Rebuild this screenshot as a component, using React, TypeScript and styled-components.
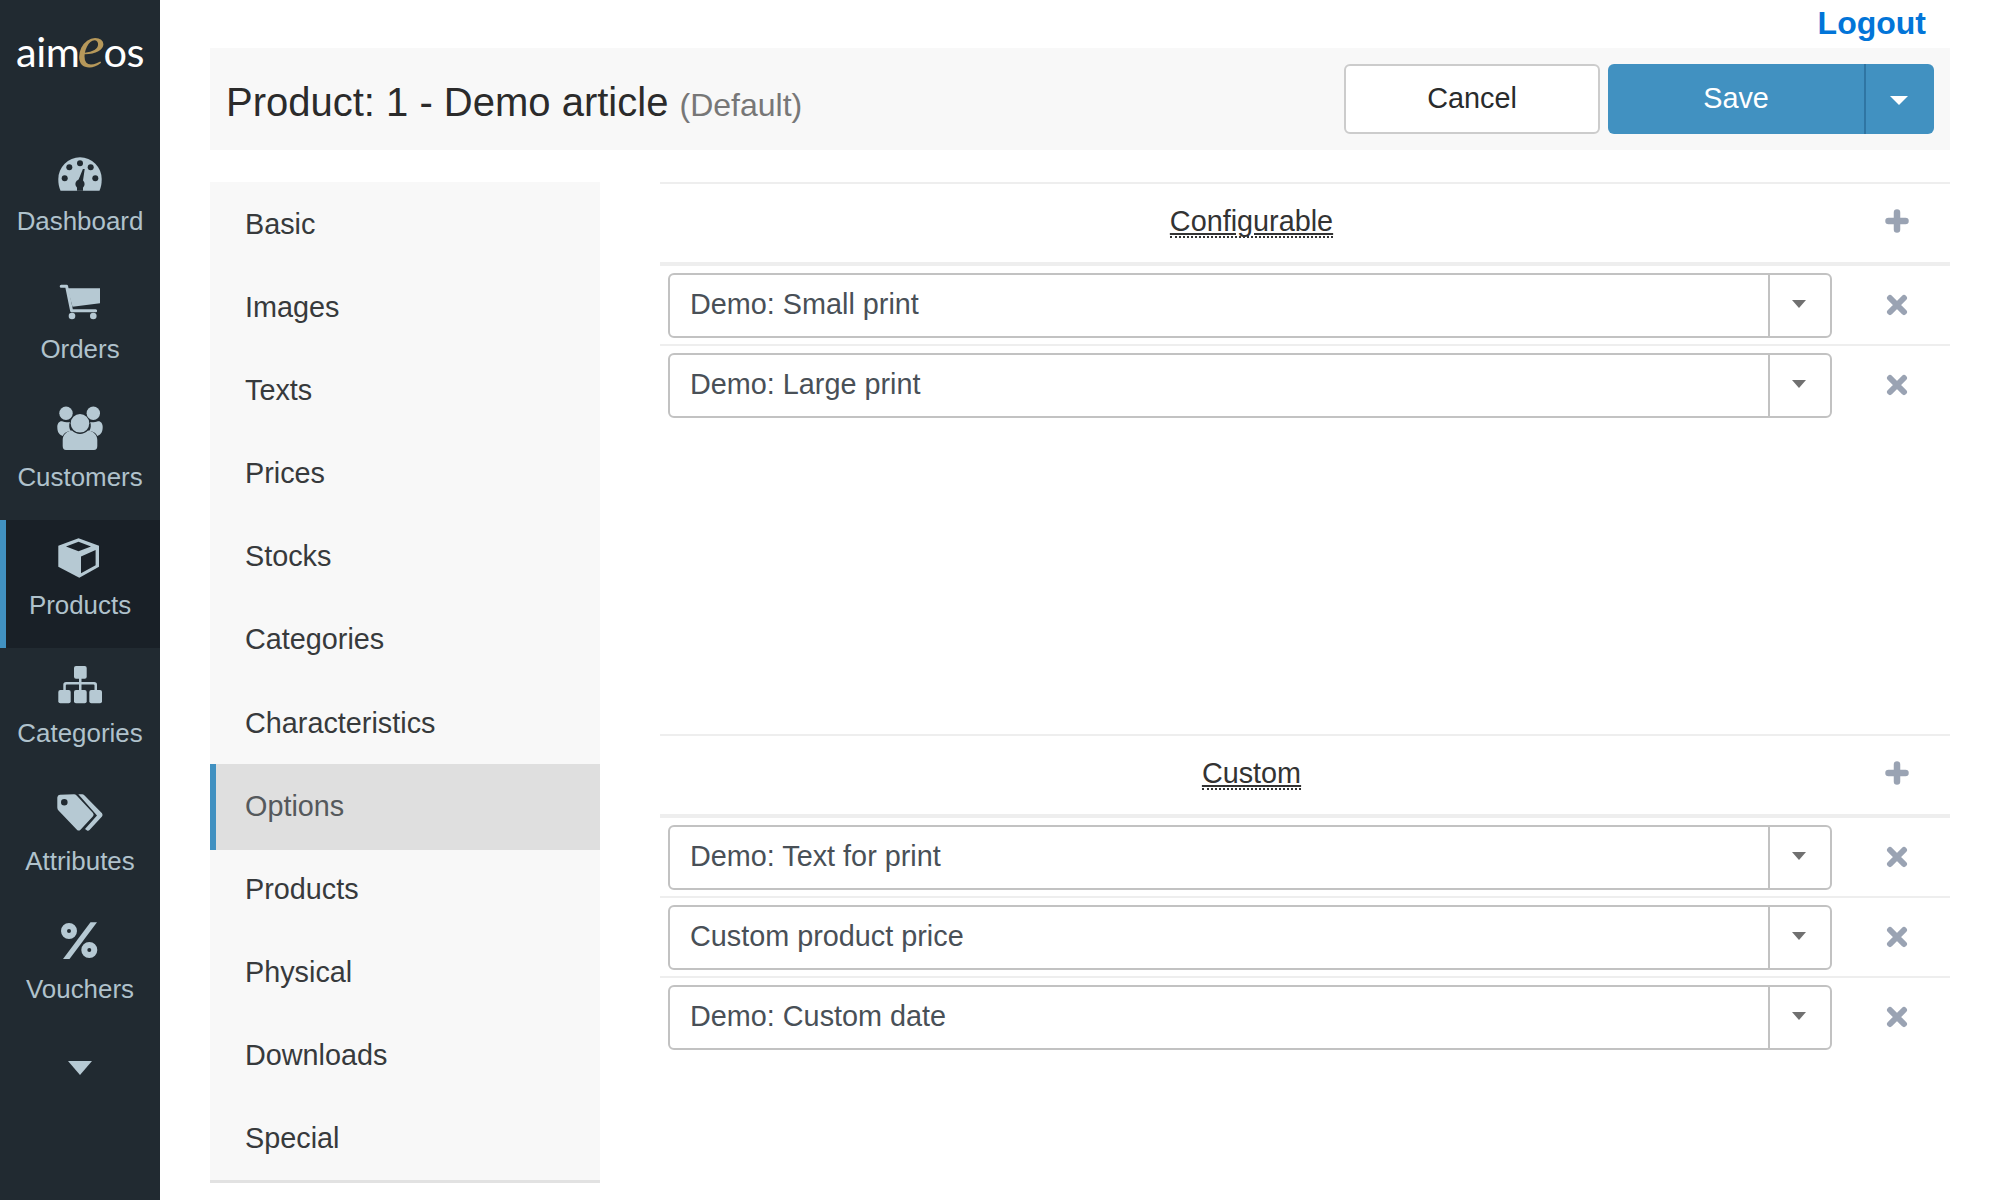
import React from 'react';
import styled, { createGlobalStyle } from 'styled-components';

const GlobalStyle = createGlobalStyle`
  html, body {
    margin: 0;
    height: 100%;
    overflow: hidden;
    background: #fff;
    font-family: "Liberation Sans", Arial, sans-serif;
    font-size: 28.8px;
    color: #333;
  }
  * { box-sizing: border-box; }
`;

const Page = styled.div`
  display: flex;
  width: 1999px;
  height: 1200px;
`;

const Sidebar = styled.aside`
  flex: 0 0 160px;
  background: #212a31;
  display: flex;
  flex-direction: column;
`;

const Logo = styled.div`
  height: 136px;
  padding-top: 21px;
  text-align: center;
  color: #fff;
  font-family: Lato, sans-serif;
  font-weight: 400;
  font-size: 41.5px;
  line-height: 60px;
  letter-spacing: -0.5px;
`;

const LogoAccent = styled.span`
  font-family: "Liberation Serif", serif;
  font-style: italic;
  font-size: 62px;
  line-height: 0;
  margin: 0 -1px 0 -2px;
  color: #b6985a;
`;

const SideItem = styled.a<{ $active?: boolean }>`
  --icon-hole: ${(p) => (p.$active ? '#192027' : '#212a31')};
  height: 128px;
  display: flex;
  flex-direction: column;
  align-items: center;
  padding-top: 12px;
  color: #b0c2cc;
  font-size: 25.92px;
  line-height: 30px;
  background: ${(p) => (p.$active ? '#192027' : 'transparent')};
  border-left: ${(p) => (p.$active ? '6px solid #4191c1' : '0')};
  padding-right: ${(p) => (p.$active ? '6px' : '0')};
  svg {
    display: block;
    width: 60px;
    height: 48px;
    margin-bottom: 10px;
    color: #b6c9d3;
    fill: currentColor;
    flex: none;
  }
`;

const MoreCaret = styled.div`
  display: flex;
  justify-content: center;
  padding-top: 29px;
`;

const Caret = styled.span<{ $width: number; $height: number; $color: string }>`
  display: block;
  width: 0;
  height: 0;
  border-style: solid;
  border-width: ${(p) => `${p.$height}px ${p.$width / 2}px 0`};
  border-color: ${(p) => p.$color} transparent transparent;
`;

const Main = styled.main`
  flex: 1;
  min-width: 0;
  padding: 0 49px 0 50px;
`;

const TopBar = styled.div`
  height: 48px;
  display: flex;
  justify-content: flex-end;
  align-items: flex-start;
  padding-right: 24px;
`;

const Logout = styled.a`
  color: #0275d8;
  font-weight: 700;
  font-size: 32px;
  line-height: 46px;
`;

const Header = styled.header`
  height: 102px;
  margin-bottom: 32px;
  background: #f8f8f8;
  display: flex;
  align-items: center;
  justify-content: space-between;
  padding: 0 16px;
`;

const Title = styled.h1`
  margin: 0;
  padding-top: 7px;
  font-size: 40px;
  font-weight: 400;
  color: #2b2b2b;
`;

const TitleHint = styled.small`
  font-size: 32px;
  color: #777;
`;

const Actions = styled.div`
  display: flex;
  gap: 8px;
`;

const CancelButton = styled.button`
  width: 256px;
  height: 70px;
  padding: 0 0 2px;
  background: #fff;
  border: 2px solid #ccc;
  border-radius: 6px;
  color: #292b2c;
  font: inherit;
`;

const SaveGroup = styled.div`
  display: flex;
  width: 326px;
  height: 70px;
  background: #4191c1;
  border-radius: 6px;
  color: #fff;
`;

const SaveButton = styled.button`
  flex: 1;
  padding: 0 0 2px;
  background: none;
  border: 0;
  color: inherit;
  font: inherit;
`;

const SaveCaret = styled.button`
  flex: 0 0 70px;
  background: none;
  border: 0;
  border-left: 2px solid #2f75a3;
  display: flex;
  align-items: center;
  justify-content: center;
  padding: 2px 2px 0 0;
`;

const Body = styled.div`
  display: flex;
  gap: 60px;
`;

const TabList = styled.nav`
  flex: 0 0 390px;
  height: 1001px;
  background: #f8f8f8;
  border-bottom: 3px solid #e2e2e2;
`;

const Tab = styled.a<{ $active?: boolean }>`
  display: flex;
  align-items: center;
  height: ${(p) => (p.$active ? '86px' : '83.17px')};
  margin-bottom: ${(p) => (p.$active ? '-2.83px' : '0')};
  padding: ${(p) => (p.$active ? '0 0 2px 29px' : '1px 0 0 35px')};
  background: ${(p) => (p.$active ? '#dfdfdf' : 'transparent')};
  border-left: ${(p) => (p.$active ? '6px solid #4191c1' : '0')};
  color: ${(p) => (p.$active ? '#55595c' : '#373a3c')};
`;

const Content = styled.div`
  flex: 1;
  min-width: 0;
`;

const Section = styled.section<{ $minHeight: number }>`
  min-height: ${(p) => p.$minHeight}px;
`;

const SectionHead = styled.div`
  display: flex;
  align-items: center;
  height: 84px;
  border-top: 2px solid #eee;
  border-bottom: 4px solid #eee;
`;

const SectionTitle = styled.div`
  flex: 1;
  padding-bottom: 3px;
  text-align: center;
`;

const HelpText = styled.span`
  display: inline-block;
  color: #333;
  line-height: 30px;
  text-decoration: underline;
  border-bottom: 2px dotted #333;
`;

const ActionCell = styled.div<{ $lift?: number }>`
  flex: 0 0 107px;
  display: flex;
  justify-content: center;
  padding-bottom: ${(p) => p.$lift ?? 0}px;
  svg {
    display: block;
    stroke: #9aa3b3;
    stroke-linecap: round;
    fill: none;
  }
`;

const Row = styled.div`
  display: flex;
  align-items: center;
  height: 80px;
  border-bottom: 2px solid #eee;
  padding-left: 8px;
  &:last-child { border-bottom-color: transparent; }
`;

const SelectBox = styled.div`
  flex: 0 0 1164px;
  height: 65px;
  margin-right: 11px;
  display: flex;
  align-items: stretch;
  border: 2px solid #c2c2c2;
  border-radius: 6px;
`;

const SelectText = styled.div`
  flex: 1;
  display: flex;
  align-items: center;
  padding: 0 0 2px 20px;
  color: #495057;
`;

const SelectCaret = styled.div`
  flex: 0 0 62px;
  border-left: 2px solid #c2c2c2;
  display: flex;
  align-items: center;
  justify-content: center;
  padding: 0 2px 3px 0;
`;

const DashboardIcon = () => (
  <svg viewBox="0 0 60 48">
    <path d="M10.5 42.7C8.8 39 8.3 35 8.3 31a21.7 21.7 0 0 1 43.4 0c0 4-.5 8-2.2 11.7Z" />
    <g fill="var(--icon-hole)">
      <circle cx="14.7" cy="30.3" r="3" />
      <circle cx="19.3" cy="19.3" r="3" />
      <circle cx="30" cy="15.3" r="3" />
      <circle cx="40.7" cy="19.3" r="3" />
      <circle cx="45.3" cy="30.3" r="3" />
      <circle cx="30" cy="36" r="4.6" />
      <path d="M28 33 32.9 21h1.800L32.500 36ZM27 42.7h6V38h-6Z" />
    </g>
  </svg>
);

const CartIcon = () => (
  <svg viewBox="0 0 60 48">
    <path d="M11.2 10.2h5.4l5 24.6h24" fill="none" stroke="currentColor" strokeWidth="3" strokeLinejoin="round" strokeLinecap="round" />
    <path d="M17.5 12.3H50v15l-27.5 3.4Z" />
    <circle cx="22" cy="40" r="3.3" />
    <circle cx="43.3" cy="40" r="3.3" />
  </svg>
);

const UsersIcon = () => (
  <svg viewBox="0 0 60 48">
    <circle cx="16" cy="9.3" r="6.7" />
    <circle cx="43.3" cy="9.3" r="6.7" />
    <path d="M7.3 23c0-4 2.5-6.5 5.5-5.5 2 1 5 1 7 .4-1 3-.8 6.5 1 9-4 .5-7 2-8 5-3-1-5.5-3-5.5-8.9ZM52.7 23c0-4-2.5-6.5-5.5-5.5-2 1-5 1-7 .4 1 3 .8 6.5-1 9 4 .5 7 2 8 5 3-1 5.5-3 5.5-8.9Z" />
    <circle cx="30" cy="19.3" r="9.3" />
    <path d="M16 46q-3.300 0-3.300-4v-6c0-5.500 4.300-9 9.300-9.500 4.500 4.500 11.500 4.500 16 0 5 .5 9.300 4 9.300 9.500v6q0 4-3.300 4Z" />
  </svg>
);

const CubeIcon = () => (
  <svg viewBox="0 0 60 48">
    <path d="M28.5 6.300 49 13.700v21L29.300 45.700 8.300 34.700v-21Z" />
    <path fill="var(--icon-hole)" d="M28.500 9.800 16 14.500l12.500 4.700L41 14.500ZM31 24.500 45.600 18v15.200L31 41.200Z" />
  </svg>
);

const SitemapIcon = () => (
  <svg viewBox="0 0 60 48">
    <rect x="24" y="6" width="12.700" height="12.700" rx="2" />
    <rect x="8.300" y="30" width="12.400" height="13.300" rx="2" />
    <rect x="24" y="30" width="12.700" height="13.300" rx="2" />
    <rect x="39.300" y="30" width="12.700" height="13.300" rx="2" />
    <path d="M29 18h2.500v4h12.700q2.800 0 2.800 2.800V30h-2.500v-4.500q0-1-1-1H31.500V30H29v-5.500H16.800q-1 0-1 1V30h-2.500v-5.200q0-2.800 2.800-2.800H29Z" />
  </svg>
);

const TagsIcon = () => (
  <svg viewBox="0 0 60 48">
    <path fillRule="evenodd" d="M10 6.800 24 6.300q1.500 0 2.600 1.200L43 25q1.300 1.700 0 3.200L30.500 41.700q-1.800 1.800-3.600 0L8.500 22.500q-1.200-1.200-1.200-3V9.500Q7.500 7 10 6.800ZM14.300 11a3.300 3.300 0 1 0 0 6.600 3.300 3.300 0 0 0 0-6.600Z" />
    <path d="M28.300 6.300h4q1 0 2 1L52 25.200q1.200 1.800 0 3.200L39.500 42q-1.200 1.300-2.400.5L35 41 47 27.500Z" />
  </svg>
);

const PercentIcon = () => (
  <svg viewBox="0 0 60 48">
    <circle cx="19" cy="15" r="5" fill="none" stroke="currentColor" strokeWidth="6" />
    <circle cx="39.300" cy="34" r="5" fill="none" stroke="currentColor" strokeWidth="6" />
    <path d="M40.500 6.300h6.500L19.500 43H13Z" />
  </svg>
);

const PlusIcon = () => (
  <svg width="24" height="24" viewBox="0 0 24 24" strokeWidth="6.500">
    <path d="M12 3.500v17M3.500 12h17" />
  </svg>
);

const CloseIcon = () => (
  <svg width="22" height="22" viewBox="0 0 22 22" strokeWidth="6">
    <path d="M4 4l14 14M18 4 4 18" />
  </svg>
);

const sideItems = [
  { label: 'Dashboard', icon: <DashboardIcon /> },
  { label: 'Orders', icon: <CartIcon /> },
  { label: 'Customers', icon: <UsersIcon /> },
  { label: 'Products', icon: <CubeIcon />, active: true },
  { label: 'Categories', icon: <SitemapIcon /> },
  { label: 'Attributes', icon: <TagsIcon /> },
  { label: 'Vouchers', icon: <PercentIcon /> },
];

const tabs = [
  'Basic',
  'Images',
  'Texts',
  'Prices',
  'Stocks',
  'Categories',
  'Characteristics',
  'Options',
  'Products',
  'Physical',
  'Downloads',
  'Special',
];

const sections = [
  {
    title: 'Configurable',
    minHeight: 552,
    rows: ['Demo: Small print', 'Demo: Large print'],
  },
  {
    title: 'Custom',
    minHeight: 400,
    rows: ['Demo: Text for print', 'Custom product price', 'Demo: Custom date'],
  },
];

const App: React.FC = () => (
  <Page>
    <GlobalStyle />
    <Sidebar>
      <Logo>
        aim<LogoAccent>e</LogoAccent>os
      </Logo>
      {sideItems.map((item) => (
        <SideItem key={item.label} $active={item.active}>
          {item.icon}
          {item.label}
        </SideItem>
      ))}
      <MoreCaret>
        <Caret $width={25} $height={14} $color="#b6c9d3" />
      </MoreCaret>
    </Sidebar>
    <Main>
      <TopBar>
        <Logout>Logout</Logout>
      </TopBar>
      <Header>
        <Title>
          Product: 1 - Demo article <TitleHint>(Default)</TitleHint>
        </Title>
        <Actions>
          <CancelButton>Cancel</CancelButton>
          <SaveGroup>
            <SaveButton>Save</SaveButton>
            <SaveCaret>
              <Caret $width={19} $height={9} $color="#fff" />
            </SaveCaret>
          </SaveGroup>
        </Actions>
      </Header>
      <Body>
        <TabList>
          {tabs.map((tab) => (
            <Tab key={tab} $active={tab === 'Options'}>
              {tab}
            </Tab>
          ))}
        </TabList>
        <Content>
          {sections.map((section) => (
            <Section key={section.title} $minHeight={section.minHeight}>
              <SectionHead>
                <SectionTitle>
                  <HelpText>{section.title}</HelpText>
                </SectionTitle>
                <ActionCell $lift={5}>
                  <PlusIcon />
                </ActionCell>
              </SectionHead>
              {section.rows.map((row) => (
                <Row key={row}>
                  <SelectBox>
                    <SelectText>{row}</SelectText>
                    <SelectCaret>
                      <Caret $width={15} $height={8} $color="#707070" />
                    </SelectCaret>
                  </SelectBox>
                  <ActionCell>
                    <CloseIcon />
                  </ActionCell>
                </Row>
              ))}
            </Section>
          ))}
        </Content>
      </Body>
    </Main>
  </Page>
);

export default App;
